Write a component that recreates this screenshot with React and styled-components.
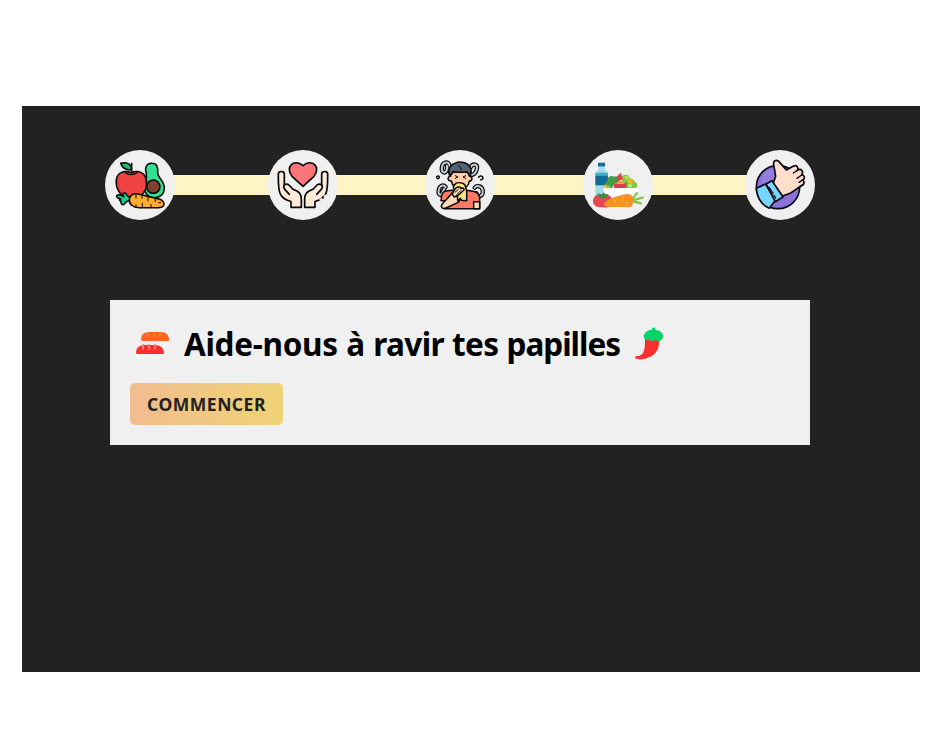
import React from "react";
import styled, { createGlobalStyle } from "styled-components";

const GlobalStyle = createGlobalStyle`
  * { box-sizing: border-box; }
  body { margin: 0; background: #fff; }
`;

const Page = styled.main`
  width: 944px;
  height: 742px;
  padding: 106px 24px 70px 22px;
`;

const Panel = styled.section`
  height: 566px;
  padding: 44px 83px 0;
  background: #222;
`;

const Steps = styled.ol`
  display: grid;
  grid-template-columns: 163px 157px 158px 162px 70px;
  width: 710px;
  height: 70px;
  margin: 0;
  padding: 0;
  list-style: none;
  background: linear-gradient(#fff4c4, #fff4c4) center / 640px 20px no-repeat;
`;

const Step = styled.li`
  width: 70px;
  height: 70px;
  border-radius: 50%;
  background: #f0f0f0;
`;

const StepIcon = styled.svg`
  display: block;
  width: 70px;
  height: 70px;
  stroke-linecap: round;
  stroke-linejoin: round;
`;

const Card = styled.article`
  width: 700px;
  height: 145px;
  margin: 80px 0 0 5px;
  padding: 20px;
  background: #f0f0f0;
`;

const Heading = styled.div`
  display: flex;
  align-items: center;
  height: 48px;
  margin-bottom: 15px;
`;

const Title = styled.h1`
  width: 434px;
  margin: 0 15px 0 12px;
  font: 700 31.5px/48px "Noto Sans", sans-serif;
  letter-spacing: -0.65px;
  word-spacing: 0.6px;
  white-space: nowrap;
  color: #000;
`;

const TitleWord = styled.span`
  letter-spacing: ${(p) => p.$tracking}px;
`;

const Emoji = styled.svg`
  flex: none;
  display: block;
  width: ${(p) => p.$width}px;
  height: ${(p) => p.$height}px;
  margin-top: ${(p) => p.$drop}px;
`;

const StartButton = styled.button`
  display: flex;
  align-items: center;
  justify-content: center;
  width: 153px;
  height: 42px;
  padding: 0;
  border: 0;
  border-radius: 5px;
  background: linear-gradient(90deg, #f1bc8f, #f0d377);
  color: #222;
  font: 700 17.5px/24px "Noto Sans", sans-serif;
  letter-spacing: 0.5px;
  white-space: nowrap;
`;

const Vegetables = () => (
  <StepIcon viewBox="15 15 210 210" stroke="#050505" strokeWidth="4.5">
    <path fill="#35df91" d="M139 85C132 62 144 54 156 55c15 0 19 13 17 29 0 13 20 24 20 44 0 20-13 30-29 30-24 0-35-20-30-41 4-12 8-17 5-32Z" />
    <circle cx="160" cy="125" r="20" fill="#7d422d" />
    <path fill="#f04444" d="M94 83c20-9 44 0 46 25 2 31-18 52-39 49-8-4-12-1-20 0-21-2-35-30-32-53 3-21 24-29 45-21Z" />
    <path fill="#c92d3b" stroke="none" d="M66 83c-22 12-13 62 17 71-19-5-32-24-32-43 0-16 6-24 15-28Z" />
    <path fill="none" d="M77 84c8 6 25 6 33 0M95 84V55M131 88c8 9 8 21 8 28" />
    <path fill="#18b979" d="M91 75C75 75 66 68 62 55c18-4 30 2 33 15Z" />
    <path fill="#20c88b" d="M90 158c-8-5-11-8-13-13-4-4-9-1-8 3l2 7c-6-4-15-8-20-4-5 6 5 9 11 11-6 2-3 6 1 6-1 8 2 12 7 11 5-2 4-9 20-13Z" />
    <path fill="#ffad2b" d="M92 153c5-7 14-8 22-6l66 16c10 3 14 12 11 19-3 5-9 6-16 6h-58c-18 0-31-11-29-26Z" />
    <path fill="none" strokeWidth="3" d="M108 149v10M126 152v8M144 157v10M166 163v7M108 180v6M127 175v11M153 179v7M176 173h6" />
  </StepIcon>
);

const Donation = () => {
  const hand = "M46 87c0-10 18-10 18 0v33c6-5 12-3 17 3l8 9 14 7c10 6 12 13 12 23v25H84v-17c-15-6-26-9-32-23-7-15-6-35-6-60Z";
  return (
    <StepIcon viewBox="15 15 210 210" stroke="#050505" strokeWidth="5">
      <path fill="#ff7478" d="M120 124 87 94C65 66 93 39 120 62c27-23 55 4 33 32Z" />
      <path fill="#ffead9" d={hand} />
      <path fill="#ffead9" d={hand} transform="matrix(-1 0 0 1 240 0)" />
      <path fill="none" d="M64 120c-5 6 0 12 4 16l11 12M176 120c5 6 0 12-4 16l-11 12" />
      <path stroke="#f0f0f0" strokeWidth="6" d="m172 164 5-2m6-5 4-5" />
      <circle cx="180" cy="157" r="1" />
    </StepIcon>
  );
};

const Nausea = () => {
  const swirls = "M88 79c3-22-1-29-13-26-11 4-13 25-4 29 8 3 11-9 10-20M153 66c5-12 20-8 18 4-2 14-14 24-19 17M77 126c-8-9-19-3-21 10-2 16 8 17 12 6l5-11M164 128c8-9 22-4 24 8 2 15-6 19-16 17l-3-8";
  return (
    <StepIcon viewBox="15 15 210 210" stroke="#090909" strokeWidth="4.5">
      <g fill="none">
        <path strokeWidth="13" d={swirls} />
        <path stroke="#c6ccd4" strokeWidth="6" d={swirls} />
        <circle cx="54" cy="97" r="4" /><path d="M176 97c3-7 13-4 13 2-1 4-4 6-7 5" />
      </g>
      <path fill="#ffcda8" d="M92 81h56v13c11-1 10 15 0 14-2 17-13 22-26 22s-25-6-28-22c-13 1-12-14-2-14Z" />
      <path fill="#536270" d="M88 90c-5-18 2-31 17-35 15-7 37-4 46 12 5 7 2 17 0 24-7 0-6-6-9-10-17 2-34 0-43-1-2 5-2 10-11 10Z" />
      <path fill="none" strokeWidth="3" d="M115 62c6 3 8 7 8 13M106 92l8 4-8 4M137 92l-8 4 8 4" />
      <path fill="#ff7964" d="m96 136-18 2c-13 2-15 15-15 29h20l-8 24h104v-24c2-17-5-27-23-29l-18-2Z" />
      <path fill="#ffdbb6" d="M161 170h18v21h-18ZM105 134 84 158l-18 20c-6 9 4 15 12 11l37-17 15-20-4-18Z" />
      <path fill="#ffe783" d="M103 120c5-8 17-8 25-5 11 3 8 14 12 23v29l-15-1-4-6-8 8-2-29c-9-2-14-12-8-19Z" />
      <path fill="#ffdbb6" d="M116 126c-10-2-9 6-16 14-4 4-2 11 3 16l13-6 13-12c7-6 0-12-6-7 0-4-3-5-7-5Z" />
      <path fill="none" strokeWidth="3" d="m105 142 10-9m-4 15 11-11" />
    </StepIcon>
  );
};

const Salad = () => (
  <StepIcon viewBox="15 15 210 210">
    <path fill="#176b9a" d="M60 53h21v12H60z" />
    <path fill="#9ddded" d="M63 65h15c0 13 12 10 12 27v61H52V92c0-17 11-14 11-27Z" />
    <path fill="#44abc9" d="M52 83h38v9H52zm27 38h11v31H79z" />
    <path fill="#126a96" d="M52 92h38v29H52z" />
    <g fill="#429c45"><circle cx="101" cy="106" r="13" /><circle cx="93" cy="120" r="12" /><circle cx="115" cy="105" r="11" /><circle cx="154" cy="117" r="17" /></g>
    <g fill="#83c940"><circle cx="143" cy="101" r="12" /><circle cx="156" cy="120" r="10" /><circle cx="169" cy="121" r="9" /><path d="M82 128c0-12 12-12 17 1H80Z" /></g>
    <path fill="#bce46b" d="m137 95 12 9 4-7-5-4ZM150 119l10-4 3 11-13 2Z" />
    <path fill="#e53b43" d="m128 83 7 20-19 5 2-14ZM106 116h39c0 12-9 18-20 18-13 0-20-7-19-18Z" />
    <path fill="#ff943d" d="m114 117 10-11 21 9Z" /><circle cx="158" cy="109" r="8" fill="#fab91e" />
    <path fill="#fbc02c" d="m75 129 6-12 7 12Z" />
    <path fill="#fff" d="M76 129h104c0 22-11 43-24 52H99c-11-9-23-29-23-52Z" />
    <path fill="none" stroke="#8ac44b" strokeWidth="7" d="m159 166 18-21m-17 22 34-9m-33 10 28 7" />
    <path fill="#e34853" d="M75 148c22-2 30 12 28 25-3 13-14 16-30 14-17 1-28-6-28-19 0-14 12-22 30-20Z" />
    <path fill="#2e9145" d="m73 149-11-4-5 4 7 3-5 7 11-3 5 7 3-7 13 3-6-7 7-4-10-1-6-5Z" />
    <path fill="#f79025" d="M81 172c17-14 40-20 62-24 8-3 16-1 20 7 4 12 2 26-4 31H93c-14 1-17-8-12-14Z" />
    <path fill="none" stroke="#ffb730" strokeWidth="4" d="m108 163 4 10M136 154v7m12 11v13m-26-5v5" />
  </StepIcon>
);

const ThumbUp = () => (
  <StepIcon viewBox="15 15 210 210" stroke="#080812" strokeWidth="5">
    <circle cx="114" cy="126" r="65" fill="#8b73d9" />
    <path fill="#aa91eb" stroke="none" d="M66 90c24-24 61-30 89-8l-26 35-59 23Z" opacity=".35" />
    <path fill="#ffdfcb" d="m98 119 9-25-6-35c-2-15 11-16 18-7l20 23 22-12c9-4 16 6 11 13 11-7 20 3 13 14 9 0 11 9 4 15 6 8 3 15-6 18l-31 21-24 9Z" />
    <path fill="none" strokeWidth="4" d="m172 76-12 8m25 6-14 10m18 4-12 8m12 7-10 6" />
    <path fill="#77d5ff" d="m49 130 28-13 29 49-18 24c-21-8-37-31-39-60Z" />
    <path fill="#77d5ff" d="m78 117 18-10 33 49-23 14Z" />
    <path fill="none" strokeWidth="4" d="m87 127 12 18m3 6 5 8" />
  </StepIcon>
);

const Sandwich = () => (
  <Emoji $width={42} $height={34} $drop={6} viewBox="0 0 42 34">
    <path fill="#f4f4f4" d="M10 11h28v5l-3 9H9l-2-1H7v4q0 2 3 2h19q4 0 4-5V11Z" opacity=".7" />
    <path fill="#ff6321" d="M11 10c0-6 3-8 9-8h11c5 0 8 3 8 8 0 1-1 1-2 1H13q-2 0-2-1Z" />
    <path fill="#fb302d" d="M6 23c0-6 4-8 9-8h10c6 0 9 4 9 8 0 1-1 1-2 1H8q-2 0-2-1Z" />
    <path fill="none" stroke="#ff8b27" strokeWidth="1.6" strokeLinecap="round" d="M18 3v3m6-3v3m6-3v3" />
    <path fill="none" stroke="#ff727a" strokeWidth="2" strokeLinecap="round" d="M13 15v4m6-4v4m6-4v4" />
  </Emoji>
);

const Chili = () => (
  <Emoji $width={34} $height={34} $drop={0} viewBox="0 0 34 34">
    <path fill="#fb302d" d="M12 12h14v4c0 9-7 15-16 16-3 1-8 0-8-2 0-1 2-1 4-1 6-2 6-9 6-17Z" />
    <path fill="#00d568" d="M19 1q2-1 3 0v2c5 0 8 3 8 6s-2 5-5 5l-3-1-3 1-3-1c-4 1-6-2-5-5s4-5 8-5Z" />
  </Emoji>
);

export default function App() {
  return (
    <>
      <GlobalStyle />
      <Page>
        <Panel>
          <Steps>
            {[Vegetables, Donation, Nausea, Salad, ThumbUp].map((Icon) => (
              <Step key={Icon.name}><Icon /></Step>
            ))}
          </Steps>
          <Card>
            <Heading>
              <Sandwich />
              <Title>
                <TitleWord $tracking={-0.3}>Aide-nous à </TitleWord>
                ravir tes <TitleWord $tracking={-1}>papilles</TitleWord>
              </Title>
              <Chili />
            </Heading>
            <StartButton type="button">COMMENCER</StartButton>
          </Card>
        </Panel>
      </Page>
    </>
  );
}
